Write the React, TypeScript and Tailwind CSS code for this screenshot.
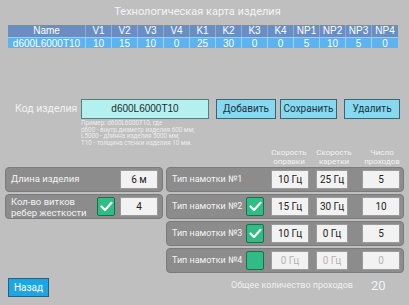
import React from 'react';

const cols = ['Name', 'V1', 'V2', 'V3', 'V4', 'K1', 'K2', 'K3', 'K4', 'NP1', 'NP2', 'NP3', 'NP4'];
const vals = ['d600L6000T10', '10', '15', '10', '0', '25', '30', '0', '0', '5', '10', '5', '0'];

function Check({ on }: { on: boolean }) {
  return (
    <div className="w-[18px] h-[19px] bg-[#2fbd85] border border-[#1f6e4f] rounded-[2px] flex items-center justify-center shrink-0">
      {on && (
        <svg width="13" height="11" viewBox="0 0 13 11">
          <path d="M1.5 5.5 L5 9 L11.5 1.8" stroke="#fff" strokeWidth="2.2" fill="none" strokeLinecap="round" strokeLinejoin="round" />
        </svg>
      )}
    </div>
  );
}

function Field({ w, text, dim }: { w: string; text: string; dim?: boolean }) {
  return (
    <div
      className={`${w} h-[19px] bg-[#f2f2f2] border border-[#9c9c9c] flex items-center justify-center text-[10px] shrink-0 ${
        dim ? 'text-[#b4b4b4]' : 'text-[#222]'
      }`}
    >
      {text}
    </div>
  );
}

const rows = [
  { n: 1, check: null as null | boolean, a: '10 Гц', b: '25 Гц', c: '5', dim: false },
  { n: 2, check: true, a: '15 Гц', b: '30 Гц', c: '10', dim: false },
  { n: 3, check: true, a: '10 Гц', b: '0 Гц', c: '5', dim: false },
  { n: 4, check: false, a: '0 Гц', b: '0 Гц', c: '0', dim: true },
];

export default function App() {
  return (
    <div className="w-[409px] h-[305px] bg-[#bfbfbf] overflow-hidden font-['Roboto',sans-serif] text-white">
      <div className="h-[25px] pt-[4px] pr-[14px] text-[11px] leading-[16px] text-center text-[#f4f4f4]">
        Технологическая карта изделия
      </div>

      <div className="ml-[8px] w-[390px] font-['Liberation_Sans',sans-serif] text-[10px]">
        <div className="grid grid-cols-[78px_repeat(12,26px)] h-[12px] bg-[#6b8ec0] leading-[12px]">
          {cols.map((c) => (
            <div key={c} className="text-center border-r border-[#8eacd4] last:border-r-0">
              {c}
            </div>
          ))}
        </div>
        <div className="grid grid-cols-[78px_repeat(12,26px)] h-[11px] bg-[#5cb3ef] leading-[11px] border-t border-[#9ccdf2]">
          {vals.map((v, i) => (
            <div key={i} className="text-center border-r border-[#9bd2f6] last:border-r-0">
              {v}
            </div>
          ))}
        </div>
      </div>

      <div className="mt-[51px] flex items-center h-[19px]">
        <div className="ml-[15px] w-[66px] text-[10.5px] text-[#f2f2f2]">Код изделия</div>
        <div className="w-[128px] h-[20px] bg-[#b4f0ee] border border-[#55807f] flex items-center justify-center text-[10px] text-[#1c2c2c] font-['Liberation_Sans',sans-serif]">
          d600L6000T10
        </div>
        <button className="ml-[7px] w-[60px] h-[20px] bg-[#86d9ef] border border-[#3d6272] text-[10px] text-[#1d3340]">
          Добавить
        </button>
        <button className="ml-[4px] w-[57px] h-[20px] bg-[#86d9ef] border border-[#3d6272] text-[10px] text-[#1d3340]">
          Сохранить
        </button>
        <button className="ml-[7px] w-[56px] h-[20px] bg-[#86d9ef] border border-[#3d6272] text-[10px] text-[#1d3340]">
          Удалить
        </button>
      </div>

      <div className="ml-[81px] mt-[2px] h-[26px] text-[6.3px] leading-[6.5px] text-[#ececec]">
        <div>Пример: d600L6000T10, где</div>
        <div>d600 - внутр.диаметр изделия 600 мм;</div>
        <div>L5000 - длинна изделия 5000 мм;</div>
        <div>T10 - толщина стенки изделия 10 мм.</div>
      </div>

      <div className="flex ml-[5px]">
        <div className="w-[158px] pt-[21px] flex flex-col gap-[2px]">
          <div className="h-[25px] bg-[#8c8c8c] border border-[#7b7b7b] rounded-[4px] flex items-center pl-[5px] pr-[4px]">
            <div className="flex-1 text-[9.5px] text-[#f4f4f4]">Длина изделия</div>
            <Field w="w-[38px]" text="6 м" />
          </div>
          <div className="h-[25px] bg-[#8c8c8c] border border-[#7b7b7b] rounded-[4px] flex items-center pl-[5px] pr-[4px]">
            <div className="flex-1 text-[9.5px] leading-[11px] text-[#f4f4f4]">
              Кол-во витков
              <br />
              ребер жесткости
            </div>
            <Check on={true} />
            <div className="w-[5px]" />
            <Field w="w-[38px]" text="4" />
          </div>
        </div>

        <div className="ml-[3px] w-[238px]">
          <div className="h-[21px] flex items-center text-[8px] leading-[9px] text-center text-[#f2f2f2]">
            <div className="ml-[103px] w-[40px]">Скорость<br />оправки</div>
            <div className="ml-[5px] w-[40px]">Скорость<br />каретки</div>
            <div className="ml-[8px] w-[40px]">Число<br />проходов</div>
          </div>
          <div className="flex flex-col gap-[2px]">
            {rows.map((r) => (
              <div
                key={r.n}
                className="h-[25px] bg-[#8c8c8c] border border-[#7b7b7b] rounded-[4px] flex items-center pl-[5px]"
              >
                <div className="w-[74px] text-[9px] text-[#f4f4f4] whitespace-nowrap">Тип намотки №{r.n}</div>
                <div className="w-[18px] shrink-0">{r.check !== null && <Check on={r.check} />}</div>
                <div className="ml-[7px]">
                  <Field w="w-[38px]" text={r.a} dim={r.dim} />
                </div>
                <div className="ml-[7px]">
                  <Field w="w-[32px]" text={r.b} dim={r.dim} />
                </div>
                <div className="ml-[14px]">
                  <Field w="w-[38px]" text={r.c} dim={r.dim} />
                </div>
              </div>
            ))}
          </div>
        </div>
      </div>

      <div className="mt-[4px] flex items-center h-[20px]">
        <button className="ml-[8px] w-[41px] h-[19px] bg-[#1ba7e6] border border-[#245f7e] text-[10px] text-white">
          Назад
        </button>
        <div className="ml-[182px] text-[9px] text-[#f0f0f0] -mt-[2px]">Общее количество проходов</div>
        <div className="ml-[18px] text-[13px] text-[#f4f4f4] -mt-[2px]">20</div>
      </div>
    </div>
  );
}
